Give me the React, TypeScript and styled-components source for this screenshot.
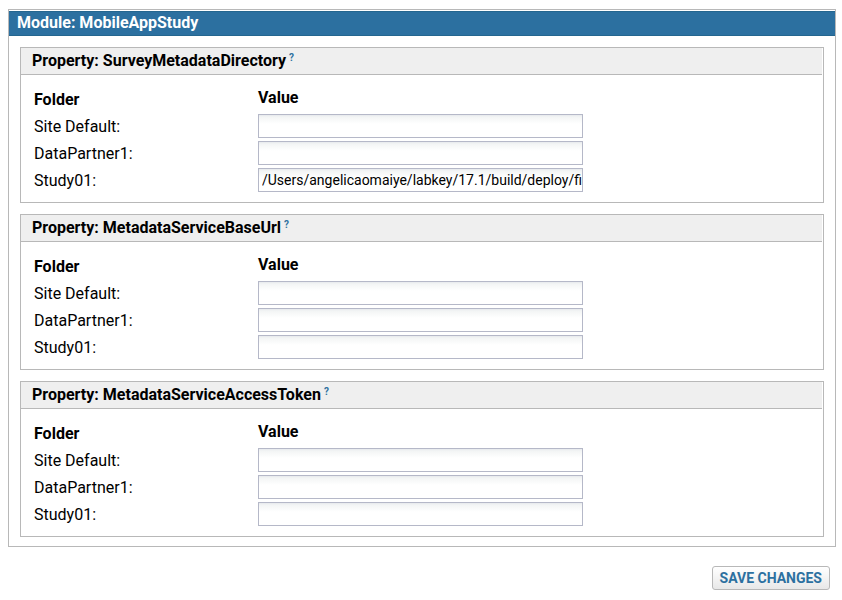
import React from 'react';
import styled, { createGlobalStyle } from 'styled-components';

const GlobalStyle = createGlobalStyle`
  * { box-sizing: border-box; }
  body { margin: 0; background: #fff; color: #000; font: 16px/20px Roboto, sans-serif; }
`;

const Page = styled.main`
  padding: 9px 6px 10px 8px;
`;

const Module = styled.section`
  border: 1px solid #b8b8b8;
  padding: 1px 0 9px;
`;

const ModuleTitle = styled.h1`
  margin: 0;
  padding: 1px 8px 2px;
  border: solid #24668f;
  border-width: 1px 0;
  background: #2c70a0;
  color: #fff;
  font-size: 16px;
  line-height: 20px;
  font-weight: 700;
`;

const PropertyList = styled.div`
  display: grid;
  gap: 11px;
  padding: 11px 11px 0;
`;

const Panel = styled.section`
  border: 1px solid #b8b8b8;
`;

const PanelTitle = styled.h2`
  margin: 0 1px 0 0;
  height: 27px;
  padding: 3px 11px;
  background: #efefef;
  border-bottom: 1px solid #b8b8b8;
  font-size: 16px;
  line-height: 20px;
  font-weight: 700;
`;

const Help = styled.a`
  margin-left: 3px;
  color: #2c70a0;
  font-size: 10px;
  line-height: 10px;
  font-weight: 700;
  vertical-align: 5px;
  text-decoration: none;
`;

const Table = styled.table`
  width: 100%;
  table-layout: fixed;
  border-collapse: collapse;
  margin: 13px 0 7px;
`;

const HeadCell = styled.th<{ $first?: boolean }>`
  width: ${(p) => (p.$first ? '237px' : 'auto')};
  height: 26px;
  padding: ${(p) => (p.$first ? '2px 0 0 13px' : '0')};
  text-align: left;
  vertical-align: top;
  font-size: 16px;
  font-weight: 700;
`;

const NameCell = styled.td`
  height: 27px;
  padding: 3px 0 0 13px;
  vertical-align: top;
`;

const ValueCell = styled.td`
  padding: 0;
  vertical-align: top;
`;

const TextBox = styled.input`
  display: block;
  width: 325px;
  max-width: 100%;
  height: 24px;
  padding: 0 0 1px 3px;
  border: 1px solid #b5b8c8;
  background: linear-gradient(#e6e9ec, #f3f5f5 2px, #fff 9px);
  color: #000;
  font: 14px Roboto, sans-serif;
  outline: none;
`;

const Actions = styled.div`
  display: flex;
  justify-content: flex-end;
  padding: 19px 6px 0;
`;

const SaveButton = styled.button`
  height: 24px;
  padding: 0 7px 1px;
  border: 1px solid #b8b8b8;
  border-radius: 3px;
  background: linear-gradient(#fff, #e8e8e8);
  color: #2c70a0;
  font: 700 14px Roboto, sans-serif;
  text-transform: uppercase;
`;

const folders = ['Site Default', 'DataPartner1', 'Study01'];
const properties = [
  { name: 'SurveyMetadataDirectory', values: ['', '', '/Users/angelicaomaiye/labkey/17.1/build/deploy/files/Study01'] },
  { name: 'MetadataServiceBaseUrl', values: ['', '', ''] },
  { name: 'MetadataServiceAccessToken', values: ['', '', ''] },
];

export default function App() {
  return (
    <Page>
      <GlobalStyle />
      <Module>
        <ModuleTitle>Module: MobileAppStudy</ModuleTitle>
        <PropertyList>
          {properties.map((property) => (
            <Panel key={property.name}>
              <PanelTitle>
                Property: {property.name}
                <Help href="#">?</Help>
              </PanelTitle>
              <Table>
                <thead>
                  <tr>
                    <HeadCell $first>Folder</HeadCell>
                    <HeadCell>Value</HeadCell>
                  </tr>
                </thead>
                <tbody>
                  {folders.map((folder, i) => {
                    const id = `${property.name}-${folder.replace(' ', '-')}`;
                    return (
                      <tr key={folder}>
                        <NameCell><label htmlFor={id}>{folder}:</label></NameCell>
                        <ValueCell><TextBox id={id} type="text" defaultValue={property.values[i]} /></ValueCell>
                      </tr>
                    );
                  })}
                </tbody>
              </Table>
            </Panel>
          ))}
        </PropertyList>
      </Module>
      <Actions>
        <SaveButton type="button">Save Changes</SaveButton>
      </Actions>
    </Page>
  );
}
